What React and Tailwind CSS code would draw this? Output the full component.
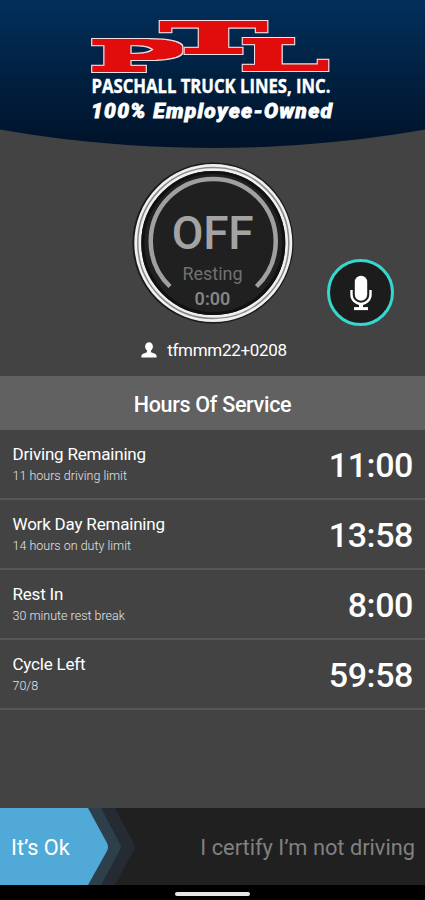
const limits = [
  { title: "Driving Remaining", note: "11 hours driving limit", time: "11:00" },
  { title: "Work Day Remaining", note: "14 hours on duty limit", time: "13:58" },
  { title: "Rest In", note: "30 minute rest break", time: "8:00" },
  { title: "Cycle Left", note: "70/8", time: "59:58" },
];

function Logo() {
  return (
    <svg width="260" height="124" viewBox="0 0 260 124" className="shrink-0">
      <defs>
        {/* thickens the slab serifs, then puts a pale rim around the letter */}
        <filter id="outline" x="-10%" y="-20%" width="120%" height="140%">
          <feMorphology in="SourceGraphic" operator="dilate" radius="1 2" result="letter" />
          <feMorphology in="letter" operator="dilate" radius="1" result="fat" />
          <feFlood floodColor="#f3dfe4" />
          <feComposite in2="fat" operator="in" />
          <feMerge>
            <feMergeNode />
            <feMergeNode in="letter" />
          </feMerge>
        </filter>
      </defs>
      <g fill="#e10a0c" fontFamily="DejaVu Serif" fontWeight="700" fontSize="40">
        <g filter="url(#outline)">
          <text transform="translate(76 52) scale(3.66 1)">T</text>
        </g>
        <g filter="url(#outline)">
          <text transform="translate(4 70.3) scale(3.25 1)">P</text>
        </g>
        <g filter="url(#outline)">
          <text transform="translate(154.500 69.300) scale(3.3 1)">L</text>
        </g>
      </g>
      <g fill="#fff" stroke="#fff" fontWeight="700">
        <text x="8.5" y="93" fontFamily="Open Sans" fontSize="19.5" strokeWidth="0.4" textLength="239" lengthAdjust="spacingAndGlyphs">
          PASCHALL TRUCK LINES, INC.
        </text>
        <text x="8" y="118" fontFamily="Roboto" fontStyle="italic" fontWeight="900" fontSize="21" strokeWidth="0.8" textLength="241" lengthAdjust="spacing">
          100% Employee-Owned
        </text>
      </g>
    </svg>
  );
}

function StatusDial() {
  return (
    <div className="relative flex h-[162px] w-[162px] shrink-0 flex-col items-center">
      <svg className="absolute inset-0" width="162" height="162" viewBox="0 0 162 162" fill="none">
        <circle cx="81" cy="81" r="80.5" fill="#1a1a1a" />
        <circle cx="81.3" cy="81" r="75.5" fill="#202020" stroke="#f0f0f0" strokeWidth="7" />
        <circle cx="81.3" cy="81" r="75.5" stroke="#8a8a8a" strokeWidth="1.5" />
        <circle cx="81.3" cy="81" r="70.5" stroke="#111" strokeWidth="3" />
        <path d="M38 124.500A62.500 62.500 0 1 1 124.500 124.500" stroke="#a0a0a0" strokeWidth="4.5" />
      </svg>
      <span className="relative mt-[43px] text-[46px] leading-[56px] font-medium tracking-[-0.3px] text-[#a3a3a3]">OFF</span>
      <span className="relative mt-[1px] text-[18px] leading-[24px] text-[#717171]">Resting</span>
      <span className="relative mt-[1px] text-[18px] leading-[24px] font-semibold text-[#858585]">0:00</span>
    </div>
  );
}

function MicButton() {
  return (
    <button className="absolute top-[259px] left-[327px] flex h-[67px] w-[67px] items-center justify-center rounded-full border-[3px] border-[#35d8d0] bg-[#1c1c1c]" aria-label="Voice">
      <svg width="22" height="36" viewBox="0 0 22 36" fill="none">
        <rect x="4.8" y="0.8" width="12.4" height="25" rx="6.2" fill="#fff" />
        <path d="M1.5 15v4.5a9.5 9.5 0 0 0 19 0V15" stroke="#fff" strokeWidth="2.4" />
        <path d="M11 28.5V33" stroke="#fff" strokeWidth="4" />
        <path d="M4 33.6h14" stroke="#fff" strokeWidth="3" />
      </svg>
    </button>
  );
}

export default function App() {
  return (
    <main className="relative flex h-[900px] w-[425px] flex-col overflow-hidden bg-[#434343] font-['Roboto',sans-serif] text-white">
      <header className="flex h-[148px] shrink-0 justify-center bg-linear-to-b from-[#022f5b] to-[#001329] [clip-path:circle(1230px_at_50%_-1082px)]">
        <Logo />
      </header>

      <section className="flex h-[228px] shrink-0 flex-col items-center pt-[14px]">
        <StatusDial />
        <div className="mt-[14px] ml-[3px] flex h-6 items-center gap-[10px]">
          <svg width="16" height="16" viewBox="0 0 16 16" fill="#fff">
            <ellipse cx="8" cy="4.6" rx="3.9" ry="4.4" />
            <path d="M6 8h4v2.3l4.5 1.6Q15.700 12.500 15.700 15.500H.3Q.3 12.500 1.500 11.900L6 10.300Z" />
          </svg>
          <span className="text-[17px] leading-6 tracking-[-0.3px]">tfmmm22+0208</span>
        </div>
      </section>
      <MicButton />

      <h2 className="flex h-[54px] shrink-0 items-center justify-center bg-[#616161] pt-[4px] text-[21.5px] font-medium tracking-[-0.3px]">Hours Of Service</h2>

      <ul>
        {limits.map((limit) => (
          <li key={limit.title} className="flex h-[70px] items-center justify-between border-b-2 border-[#575757] pr-[12px] pl-[12.5px]">
            <div className="flex flex-col">
              <span className="text-[17px] leading-[22px] tracking-[-0.2px]">{limit.title}</span>
              <span className="pt-[1px] text-[12.5px] leading-[20px] font-light text-[#e4e4e4]">{limit.note}</span>
            </div>
            <span className="pt-[2px] text-[34px] leading-10 font-medium tracking-[-0.4px]">{limit.time}</span>
          </li>
        ))}
      </ul>

      <footer className="mt-auto shrink-0 bg-black">
        <div className="relative flex h-[77px] items-center justify-between bg-[#202020] pr-[10px] pl-[11px]">
          <svg className="absolute inset-0" width="140" height="77" viewBox="0 0 140 77">
            <path d="M80 0h35L134 36q2 3 0 6L115 77H80Z" fill="#242b32" />
            <path d="M80 0h21L120 36q2 3 0 6L101 77H80Z" fill="#2c3f4a" />
            <path d="M0 0H88L107 35q2 4 0 8L88 77H0Z" fill="#51a9d8" />
          </svg>
          <span className="relative pt-[4px] text-[21.7px]">It’s Ok</span>
          <span className="relative pt-[4px] text-[21.8px] text-[#818181]">I certify I’m not driving</span>
        </div>
        <div className="flex h-[15px] items-center justify-center pt-[3px]">
          <div className="h-[4px] w-[75px] rounded-full bg-[#e8e8e8]" />
        </div>
      </footer>
    </main>
  );
}
